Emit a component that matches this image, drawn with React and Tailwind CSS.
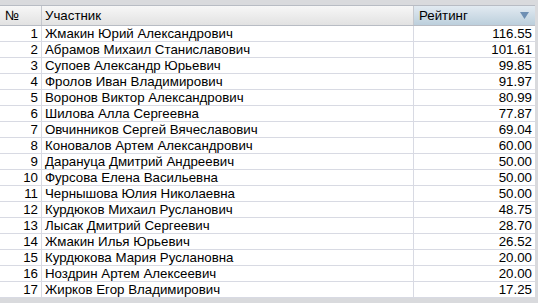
import * as React from "react";

const rows = [
  ["1", "Жмакин Юрий Александрович", "116.55"],
  ["2", "Абрамов Михаил Станиславович", "101.61"],
  ["3", "Супоев Александр Юрьевич", "99.85"],
  ["4", "Фролов Иван Владимирович", "91.97"],
  ["5", "Воронов Виктор Александрович", "80.99"],
  ["6", "Шилова Алла Сергеевна", "77.87"],
  ["7", "Овчинников Сергей Вячеславович", "69.04"],
  ["8", "Коновалов Артем Александрович", "60.00"],
  ["9", "Дарануца Дмитрий Андреевич", "50.00"],
  ["10", "Фурсова Елена Васильевна", "50.00"],
  ["11", "Чернышова Юлия Николаевна", "50.00"],
  ["12", "Курдюков Михаил Русланович", "48.75"],
  ["13", "Лысак Дмитрий Сергеевич", "28.70"],
  ["14", "Жмакин Илья Юрьевич", "26.52"],
  ["15", "Курдюкова Мария Руслановна", "20.00"],
  ["16", "Ноздрин Артем Алексеевич", "20.00"],
  ["17", "Жирков Егор Владимирович", "17.25"],
];

export default function App() {
  return (
    <div
      className="w-[538px] h-[303px] bg-[#d9dadd] pt-[5px] pr-[3px] overflow-hidden text-[13.3px] text-black"
      style={{ fontFamily: '"Liberation Sans", Arial, sans-serif' }}
    >
      <div className="w-[535px] bg-white">
        {/* header */}
        <div className="flex h-[21px] border-y border-[#b8bcc4]">
          <div className="w-[42px] border-r border-[#c5c8ce] bg-gradient-to-b from-[#f7f7f7] to-[#e2e2e2] pl-[5px] leading-[19px]">
            №
          </div>
          <div className="w-[372px] border-r border-[#c5c8ce] bg-gradient-to-b from-[#f7f7f7] to-[#e2e2e2] pl-[3px] leading-[19px]">
            Участник
          </div>
          <div className="flex-1 flex items-center justify-between bg-gradient-to-b from-[#e2eaf1] to-[#bccfdc] pl-[5px] pr-[6px] leading-[19px]">
            <span>Рейтинг</span>
            <svg width="9" height="7" viewBox="0 0 9 7">
              <path d="M0 0 H9 L4.5 7 Z" fill="#6e8fb3" />
            </svg>
          </div>
        </div>
        {/* rows */}
        {rows.map(([n, name, r]) => (
          <div key={n} className="flex h-[16px] border-b border-[#d8dae3] leading-[16px]">
            <div className="w-[42px] border-r border-[#d8dae3] text-right pr-[3px]">{n}</div>
            <div className="w-[372px] border-r border-[#d8dae3] pl-[3px]">{name}</div>
            <div className="flex-1 text-right pr-[3px]">{r}</div>
          </div>
        ))}
      </div>
    </div>
  );
}
